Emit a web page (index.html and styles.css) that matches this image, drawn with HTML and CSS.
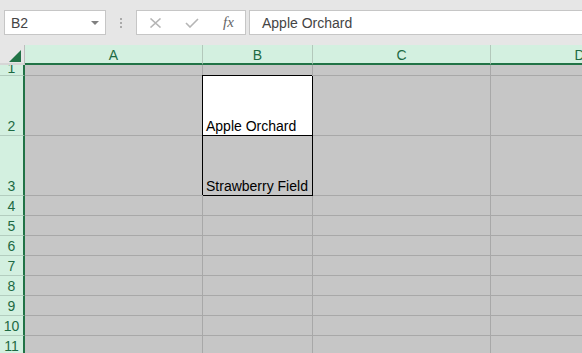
FILE: index.html
```html
<!doctype html>
<html>
  <head>
    <meta charset="utf-8">
    <title>Book1 - Excel</title>
    <link rel="stylesheet" href="styles.css">
  </head>
  <body>
    <div class="toolbar">
      <div class="namebox">
        <span>B2</span>
        <svg class="caret" viewBox="0 0 8 4"><path d="M0 0 L8 0 L4 4 Z"></path></svg>
      </div>
      <div class="grip">
        <i></i><i></i><i></i>
      </div>
      <div class="fxbox">
        <svg class="icon" viewBox="0 0 12 10">
          <path d="M1 0.5 L11 9.5 M11 0.5 L1 9.5"></path>
        </svg>
        <svg class="icon" viewBox="0 0 14 10">
          <path d="M1 5 L5 9 L13 1"></path>
        </svg>
        <span class="fx">fx</span>
      </div>
      <div class="formula">Apple Orchard</div>
    </div>

    <div class="sheet">
      <div class="corner"><svg viewBox="0 0 12 12"><path d="M0 12 L12 12 L12 0 Z"></path></svg></div>
      <div class="colhead">A</div>
      <div class="colhead">B</div>
      <div class="colhead">C</div>
      <div class="colhead">D</div>

      <div class="rowhead r1">1</div>
      <div class="cell"></div><div class="cell"></div><div class="cell"></div><div class="cell"></div>

      <div class="rowhead">2</div>
      <div class="cell"></div>
      <div class="cell boxed filled">Apple Orchard</div>
      <div class="cell"></div><div class="cell"></div>

      <div class="rowhead">3</div>
      <div class="cell"></div>
      <div class="cell boxed">Strawberry Field</div>
      <div class="cell"></div><div class="cell"></div>

      <div class="rowhead">4</div>
      <div class="cell"></div><div class="cell"></div><div class="cell"></div><div class="cell"></div>
      <div class="rowhead">5</div>
      <div class="cell"></div><div class="cell"></div><div class="cell"></div><div class="cell"></div>
      <div class="rowhead">6</div>
      <div class="cell"></div><div class="cell"></div><div class="cell"></div><div class="cell"></div>
      <div class="rowhead">7</div>
      <div class="cell"></div><div class="cell"></div><div class="cell"></div><div class="cell"></div>
      <div class="rowhead">8</div>
      <div class="cell"></div><div class="cell"></div><div class="cell"></div><div class="cell"></div>
      <div class="rowhead">9</div>
      <div class="cell"></div><div class="cell"></div><div class="cell"></div><div class="cell"></div>
      <div class="rowhead">10</div>
      <div class="cell"></div><div class="cell"></div><div class="cell"></div><div class="cell"></div>
      <div class="rowhead">11</div>
      <div class="cell"></div><div class="cell"></div><div class="cell"></div><div class="cell"></div>
    </div>
  </body>
</html>
```

FILE: styles.css
```css
html {
  box-sizing: border-box;
}

*, *:before, *:after {
  box-sizing: inherit;
}

body {
  background: #e6e6e6;
  font-family: "Liberation Sans", Arial, sans-serif;
  font-size: 14px;
  margin: 0;
  overflow: hidden;
}

/* formula bar */

.toolbar {
  display: flex;
  height: 45px;
  padding: 10px 0 10px 4px;
}

.namebox {
  align-items: center;
  background: #fff;
  border: 1px solid #c6c6c6;
  color: #444;
  display: flex;
  justify-content: space-between;
  padding: 0 6px 0 6px;
  width: 102px;
}

.caret {
  fill: #808080;
  height: 4px;
  width: 8px;
}

.grip {
  align-items: center;
  display: flex;
  flex-direction: column;
  gap: 2px;
  justify-content: center;
  width: 30px;
}

.grip i {
  background: #aaa;
  display: block;
  height: 2px;
  width: 2px;
}

.fxbox {
  align-items: center;
  background: #fff;
  border: 1px solid #c6c6c6;
  display: flex;
  gap: 23px;
  padding-left: 12px;
  width: 110px;
}

.icon {
  fill: none;
  height: 10px;
  stroke: #b5b5b5;
  stroke-width: 1.6px;
  width: 13px;
}

.icon + .icon {
  width: 14px;
}

.fx {
  color: #666;
  font-family: "Liberation Serif", serif;
  font-size: 15px;
  font-style: italic;
  margin-left: 1px;
}

.formula {
  align-items: center;
  background: #fff;
  border: 1px solid #c6c6c6;
  border-right: none;
  color: #444;
  display: flex;
  flex: 1;
  margin-left: 3px;
  padding-left: 12px;
}

/* grid */

.sheet {
  display: grid;
  grid-template-columns: 25px 178px 110px 178px 178px;
  grid-template-rows: 20px 11px 60px 60px repeat(8, 20px);
  width: 669px;
}

.corner {
  align-items: flex-end;
  border-right: 1px solid #bdbdbd;
  border-bottom: 2px solid #d6d6d6;
  display: flex;
  padding: 0 0 1px 9px;
}

.corner svg {
  fill: #217346;
  height: 12px;
  width: 12px;
}

.colhead {
  align-items: center;
  background: #d3f0e0;
  border-bottom: 2px solid #217346;
  border-right: 1px solid #b3c8bb;
  color: #1d6a43;
  display: flex;
  justify-content: center;
  padding-top: 2px;
}

.rowhead {
  align-items: flex-end;
  background: #d3f0e0;
  border-bottom: 1px solid #b3cdbf;
  border-right: 2px solid #217346;
  color: #1d6a43;
  display: flex;
  justify-content: center;
  line-height: 17px;
  overflow: hidden;
}

.rowhead.r1 {
  line-height: 14px;
}

.cell {
  align-items: flex-end;
  background: #c6c6c6;
  border-bottom: 1px solid #a8a8a8;
  border-right: 1px solid #a8a8a8;
  color: #000;
  display: flex;
  line-height: 17px;
  overflow: hidden;
  padding-left: 3px;
  white-space: nowrap;
}

.cell.boxed {
  border-color: #000;
  box-shadow: -1px -1px 0 #000;
  position: relative;
  z-index: 1;
}

.cell.filled {
  background: #fff;
}
```
